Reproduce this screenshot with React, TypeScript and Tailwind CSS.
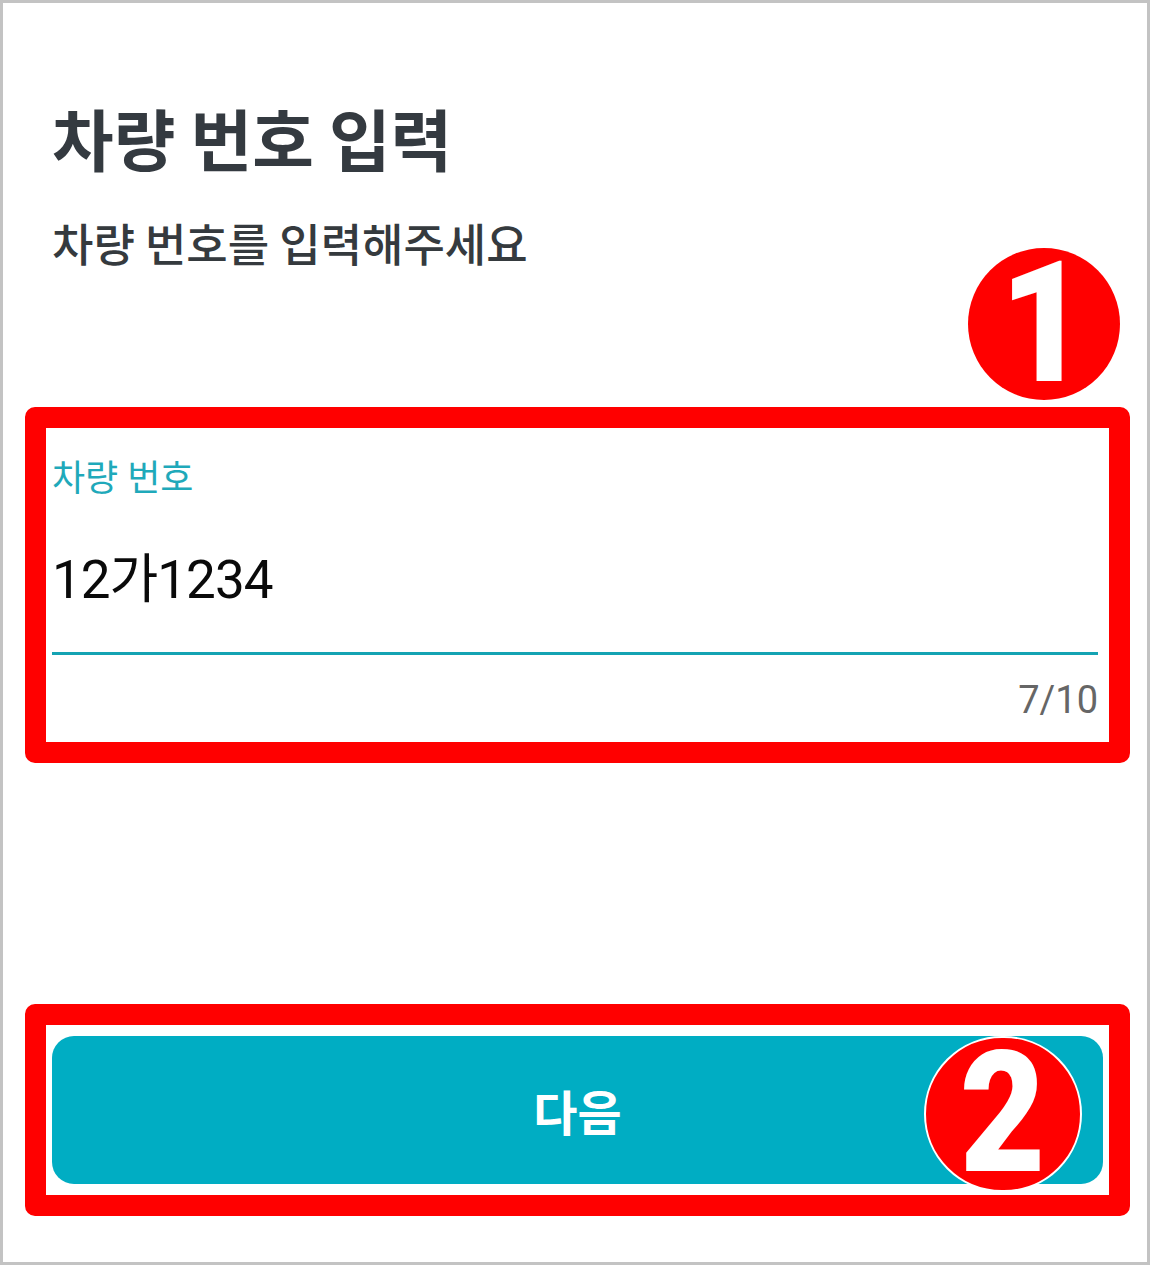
import React from "react";

const sans = "font-['Roboto','Noto_Sans_CJK_KR',sans-serif]";

function StepBadge({ n, className, numClass = "" }: { n: string; className: string; numClass?: string }) {
  return (
    <div
      className={`absolute flex items-center justify-center rounded-full bg-[#ff0000] text-white font-['Roboto',sans-serif] font-black leading-none ${className}`}
    >
      <span className={`inline-block ${numClass}`}>{n}</span>
    </div>
  );
}

export default function App() {
  return (
    <div className="relative h-[1265px] w-[1150px] border-[3px] border-[#c3c3c3] bg-white">
      <div className="flex flex-col">
        <h1 className="ml-[49px] mt-[100px] font-['Noto_Sans_CJK_KR',sans-serif] text-[67px] font-bold leading-none text-[#343a40]">
          차량 번호 입력
        </h1>
        <p className="ml-[49px] mt-[50px] font-['Noto_Sans_CJK_KR',sans-serif] text-[45px] font-medium leading-none text-[#353a3e]">
          차량 번호를 입력해주세요
        </p>

        {/* plate number field */}
        <div className="ml-[22px] mt-[142px] h-[356px] w-[1105px] rounded-[10px] border-[21px] border-[#ff0000] bg-white">
          <div className="flex flex-col pl-[6px] pr-[11px]">
            <label className={`mt-[33px] ${sans} text-[36px] leading-none text-[#1fa9ba]`}>
              차량 번호
            </label>
            <div className={`mt-[57px] ${sans} text-[53px] leading-none tracking-[-1px] text-[#0a0a0a]`}>
              12가1234
            </div>
            <div className="mt-[45px] h-[3px] w-full bg-[#14a3b3]" />
            <div className={`mt-[26px] self-end ${sans} text-[38px] leading-none text-[#666]`}>
              7/10
            </div>
          </div>
        </div>

        {/* next button */}
        <div className="ml-[22px] mt-[241px] h-[212px] w-[1105px] rounded-[10px] border-[21px] border-[#ff0000] bg-white">
          <div className="px-[6px] pt-[11px]">
            <button className="flex h-[148px] w-full items-center justify-center rounded-[22px] bg-[#00adc3] font-['Noto_Sans_CJK_KR',sans-serif] text-[48px] font-bold text-white">
              다음
            </button>
          </div>
        </div>
      </div>

      <StepBadge n="1" className="left-[965px] top-[245px] h-[152px] w-[152px] text-[168px]" numClass="scale-x-[0.9]" />
      <StepBadge
        n="2"
        className="left-[921px] top-[1033px] h-[156px] w-[158px] border-[2px] border-white text-[168px]"
        numClass="scale-x-[0.88]"
      />
    </div>
  );
}
